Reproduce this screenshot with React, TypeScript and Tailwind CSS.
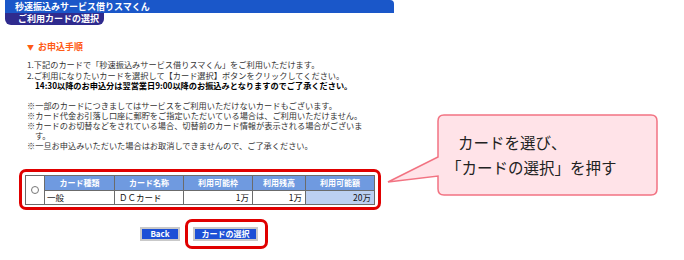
import React from "react";

const cols = [
  { label: "カード種類", w: "w-[70px]" },
  { label: "カード名称", w: "w-[69px]" },
  { label: "利用可能枠", w: "w-[69px]" },
  { label: "利用残高", w: "w-[53px]" },
  { label: "利用可能額", w: "w-[69px]" },
];

function Callout() {
  return (
    <div className="absolute left-[380px] top-[100px] w-[300px] h-[100px]">
      <svg width="300" height="100" viewBox="0 0 300 100" className="absolute left-0 top-0">
        <path
          d="M 64 15 H 271 Q 277 15 277 21 V 89 Q 277 95 271 95 H 64 Q 58 95 58 89 V 76 L 8 82 L 58 57 V 21 Q 58 15 64 15 Z"
          fill="#ffe3e8"
          stroke="#f27382"
          strokeWidth="1.5"
        />
      </svg>
      <div className="absolute left-[66px] top-[30px] text-[15.5px] leading-[25px] text-[#222] whitespace-nowrap">
        <div className="ml-[12px]">カードを選び、</div>
        <div>「カードの選択」を押す</div>
      </div>
    </div>
  );
}

export default function App() {
  return (
    <div className="relative w-[684px] h-[260px] bg-white overflow-hidden font-['Noto_Sans_CJK_JP',sans-serif]">
      {/* header */}
      <div className="ml-[5px] w-[389px] h-[13px] bg-[#1a57c9] rounded-tr-[4px] pl-[10px] text-white font-bold text-[9px] leading-[13px]">
        秒速振込みサービス借りスマくん
      </div>
      <div className="ml-[5px] w-[99px] h-[12px] bg-[#2f2b8e] rounded-b-[6px] pl-[13px] text-white font-bold text-[9px] leading-[12px]">
        ご利用カードの選択
      </div>

      {/* instructions */}
      <div className="pl-[27px] pt-[17px] text-[8.2px] text-[#333] whitespace-nowrap">
        <div className="flex items-center text-[#ff5a14] font-bold text-[9px] leading-[10px]">
          <span className="text-[7px] mr-[4px]">▼</span>
          <span>お申込手順</span>
        </div>
        <div className="mt-[7px] leading-[10.5px]">
          <div>1.下記のカードで「秒速振込みサービス借りスマくん」をご利用いただけます。</div>
          <div>2.ご利用になりたいカードを選択して【カード選択】ボタンをクリックしてください。</div>
          <div className="pl-[8px] font-bold text-black">
            14:30以降のお申込分は翌営業日9:00以降のお振込みとなりますのでご了承ください。
          </div>
        </div>
        <div className="mt-[9px] leading-[10px]">
          <div>※一部のカードにつきましてはサービスをご利用いただけないカードもございます。</div>
          <div>※カード代金お引落し口座に郵貯をご指定いただいている場合は、ご利用いただけません。</div>
          <div>※カードのお切替などをされている場合、切替前のカード情報が表示される場合がございま</div>
          <div className="pl-[8px]">す。</div>
          <div>※一旦お申込みいただいた場合はお取消しできませんので、ご了承ください。</div>
        </div>
      </div>

      {/* card table */}
      <div className="ml-[19px] mt-[19px] w-[362px] border-[3px] border-[#e00000] rounded-[7px] pl-[3px] pt-[3px] pb-[2px]">
        <table className="border-collapse border border-[#6b6b6b] text-[8px]">
          <tbody>
            <tr className="h-[15px]">
              <td rowSpan={2} className="w-[19px] border border-[#6b6b6b] bg-white align-middle">
                <div className="mx-auto w-[8px] h-[8px] rounded-full border border-[#777] bg-white" />
              </td>
              {cols.map((c) => (
                <td
                  key={c.label}
                  className={`${c.w} border border-[#6b6b6b] bg-[#6f9ae0] text-white font-bold text-center leading-[13px] p-0`}
                >
                  {c.label}
                </td>
              ))}
            </tr>
            <tr className="h-[14px] text-[8.5px] text-[#111] leading-[12px]">
              <td className="border border-[#6b6b6b] pl-[2px]">一般</td>
              <td className="border border-[#6b6b6b] pl-[4px]">ＤＣカード</td>
              <td className="border border-[#6b6b6b] text-right pr-[3px]">1万</td>
              <td className="border border-[#6b6b6b] text-right pr-[3px]">1万</td>
              <td className="border border-[#6b6b6b] text-right pr-[3px] bg-[#bcd0f2]">20万</td>
            </tr>
          </tbody>
        </table>
      </div>

      {/* buttons */}
      <div className="flex items-center mt-[9px]">
        <button className="ml-[140px] w-[40px] h-[14px] bg-[#1c4fd6] border-2 border-[#c9c9c9] text-white font-bold text-[8px] leading-[10px]">
          Back
        </button>
        <div className="ml-[5px] border-[3px] border-[#e00000] rounded-[7px] pl-[5px] pr-[7px] py-[5px]">
          <button className="block w-[65px] h-[14px] bg-[#1c4fd6] border-2 border-[#c9c9c9] text-white font-bold text-[8px] leading-[10px]">
            カードの選択
          </button>
        </div>
      </div>

      <Callout />
    </div>
  );
}
